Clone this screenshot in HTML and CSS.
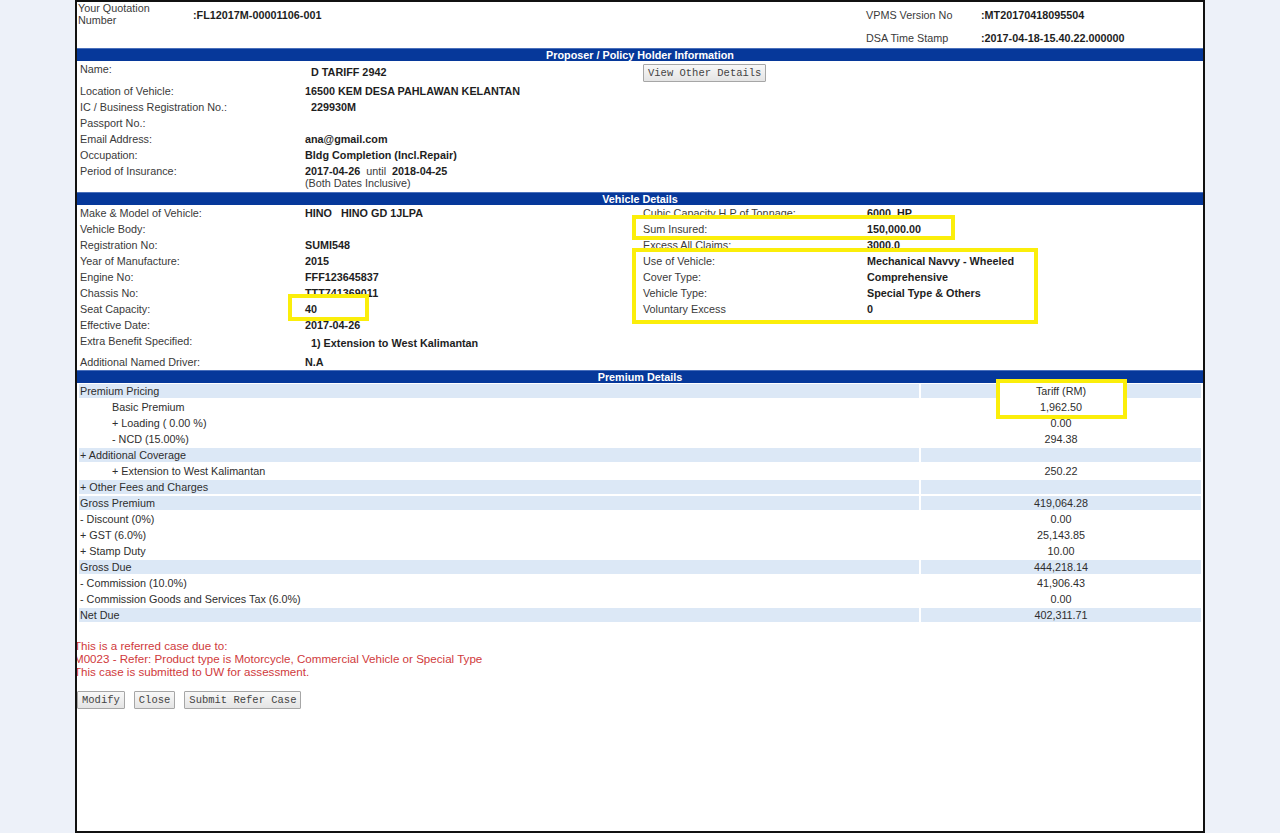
FILE: index.html
```html
<!DOCTYPE html>
<html>
<head>
<meta charset="utf-8">
<title>Quotation</title>
<link rel="stylesheet" href="styles.css">
</head>
<body>
<div class="panel">
  <div class="head">
    <div class="lbl wrap">Your Quotation Number</div>
    <div class="val">:FL12017M-00001106-001</div>
    <div class="lbl">VPMS Version No</div>
    <div class="val">:MT20170418095504</div>
    <div></div>
    <div></div>
    <div class="lbl">DSA Time Stamp</div>
    <div class="val">:2017-04-18-15.40.22.000000</div>
  </div>

  <div class="bar">Proposer / Policy Holder Information</div>
  <div class="section">
    <div class="row row-name">
      <div class="lbl top">Name:</div>
      <div class="val ind">D TARIFF 2942</div>
      <div><button class="btn" type="button">View Other Details</button></div>
    </div>
    <div class="row"><div class="lbl">Location of Vehicle:</div><div class="val">16500 KEM DESA PAHLAWAN KELANTAN</div></div>
    <div class="row"><div class="lbl">IC / Business Registration No.:</div><div class="val ind">229930M</div></div>
    <div class="row"><div class="lbl">Passport No.:</div><div class="val"></div></div>
    <div class="row"><div class="lbl">Email Address:</div><div class="val">ana@gmail.com</div></div>
    <div class="row"><div class="lbl">Occupation:</div><div class="val">Bldg Completion (Incl.Repair)</div></div>
    <div class="row row-period">
      <div class="lbl top">Period of Insurance:</div>
      <div class="period">
        <div class="val">2017-04-26&nbsp; <span class="until">until</span> &nbsp;2018-04-25</div>
        <div class="note">(Both Dates Inclusive)</div>
      </div>
    </div>
  </div>

  <div class="bar">Vehicle Details</div>
  <div class="section">
    <div class="row"><div class="lbl">Make &amp; Model of Vehicle:</div><div class="val">HINO&nbsp;&nbsp; HINO GD 1JLPA</div><div class="lbl">Cubic Capacity H.P of Tonnage:</div><div class="val">6000&nbsp; HP</div></div>
    <div class="row"><div class="lbl">Vehicle Body:</div><div class="val"></div><div class="lbl hl">Sum Insured:</div><div class="val hl">150,000.00</div></div>
    <div class="row"><div class="lbl">Registration No:</div><div class="val">SUMI548</div><div class="lbl">Excess All Claims:</div><div class="val">3000.0</div></div>
    <div class="row"><div class="lbl">Year of Manufacture:</div><div class="val">2015</div><div class="lbl hl">Use of Vehicle:</div><div class="val hl">Mechanical Navvy - Wheeled</div></div>
    <div class="row"><div class="lbl">Engine No:</div><div class="val">FFF123645837</div><div class="lbl hl">Cover Type:</div><div class="val hl">Comprehensive</div></div>
    <div class="row"><div class="lbl">Chassis No:</div><div class="val">TTT741369011</div><div class="lbl hl">Vehicle Type:</div><div class="val hl">Special Type &amp; Others</div></div>
    <div class="row"><div class="lbl">Seat Capacity:</div><div class="val"><span class="hl">40</span></div><div class="lbl hl">Voluntary Excess</div><div class="val hl">0</div></div>
    <div class="row"><div class="lbl">Effective Date:</div><div class="val">2017-04-26</div></div>
    <div class="row row-extra"><div class="lbl top">Extra Benefit Specified:</div><div class="val ind low">1) Extension to West Kalimantan</div></div>
    <div class="row row-driver"><div class="lbl">Additional Named Driver:</div><div class="val">N.A</div></div>
  </div>

  <div class="bar">Premium Details</div>
  <div class="prem">
    <div class="c b">Premium Pricing</div><div class="v b"><span class="hl">Tariff (RM)</span></div>
    <div class="c sub">Basic Premium</div><div class="v"><span class="hl">1,962.50</span></div>
    <div class="c sub">+ Loading ( 0.00 %)</div><div class="v">0.00</div>
    <div class="c sub">- NCD (15.00%)</div><div class="v">294.38</div>
    <div class="c b">+ Additional Coverage</div><div class="v b"></div>
    <div class="c sub">+ Extension to West Kalimantan</div><div class="v">250.22</div>
    <div class="c b">+ Other Fees and Charges</div><div class="v b"></div>
    <div class="c b">Gross Premium</div><div class="v b">419,064.28</div>
    <div class="c">- Discount (0%)</div><div class="v">0.00</div>
    <div class="c">+ GST (6.0%)</div><div class="v">25,143.85</div>
    <div class="c">+ Stamp Duty</div><div class="v">10.00</div>
    <div class="c b">Gross Due</div><div class="v b">444,218.14</div>
    <div class="c">- Commission (10.0%)</div><div class="v">41,906.43</div>
    <div class="c">- Commission Goods and Services Tax (6.0%)</div><div class="v">0.00</div>
    <div class="c b">Net Due</div><div class="v b">402,311.71</div>
  </div>

  <div class="refer">
    <div>This is a referred case due to:</div>
    <div>M0023 - Refer: Product type is Motorcycle, Commercial Vehicle or Special Type</div>
    <div>This case is submitted to UW for assessment.</div>
  </div>

  <div class="actions">
    <button class="btn" type="button">Modify</button>
    <button class="btn" type="button">Close</button>
    <button class="btn" type="button">Submit Refer Case</button>
  </div>

  <div class="mark mark-sum"></div>
  <div class="mark mark-use"></div>
  <div class="mark mark-seat"></div>
  <div class="mark mark-tariff"></div>
</div>
</body>
</html>
```

FILE: styles.css
```css
html, body {
  margin: 0;
  padding: 0;
}
body {
  background: #edf1f9;
  font-family: "Liberation Sans", Arial, sans-serif;
  font-size: 10.8px;
  color: #3a3a3a;
}
.panel {
  position: relative;
  box-sizing: border-box;
  margin-left: 75px;
  width: 1130px;
  height: 833px;
  border: 2px solid #111;
  background: #fff;
  overflow: hidden;
}
.head {
  display: grid;
  grid-template-columns: 116px 673px 115px 1fr;
  grid-template-rows: 26px 20px;
  align-items: center;
}
.head > .lbl:first-child {
  padding-left: 1px;
}
.lbl {
  color: #3a3a3a;
  white-space: nowrap;
}
.head .wrap {
  width: 80px;
  line-height: 12px;
  align-self: start;
  white-space: normal;
}
.val {
  font-weight: bold;
  color: #1e1e1e;
  white-space: nowrap;
}
.bar {
  box-sizing: border-box;
  height: 13px;
  line-height: 12px;
  background: #06389a;
  border-top: 1px solid #4a70bb;
  color: #fff;
  font-weight: bold;
  text-align: center;
}
.row {
  display: grid;
  grid-template-columns: 228px 338px 224px 1fr;
  height: 16px;
  line-height: 16px;
  align-items: center;
}
.row > .lbl:first-child {
  padding-left: 3px;
}
.row .top {
  align-self: start;
}
.ind {
  padding-left: 6px;
}
.row-name {
  height: 22px;
}
.row-period {
  height: 29px;
}
.row-period .period {
  align-self: start;
  padding-top: 2px;
  line-height: 12px;
}
.until {
  font-weight: normal;
  color: #3a3a3a;
}
.note {
  color: #3a3a3a;
}
.row-extra {
  height: 20px;
}
.row-extra .low {
  align-self: start;
  padding-top: 2px;
}
.row-driver {
  height: 17px;
}
.btn {
  box-sizing: border-box;
  height: 18px;
  padding: 0 4px;
  font-family: "Liberation Mono", "Courier New", monospace;
  font-size: 10.5px;
  line-height: 16px;
  color: #444;
  background: linear-gradient(#f8f8f8, #e4e4e4);
  border: 1px solid #a6a6a6;
  border-radius: 1px;
}
.row-name .btn {
  margin-top: 2px;
}
.prem {
  display: grid;
  grid-template-columns: 840px 1fr;
  grid-auto-rows: 14px;
  column-gap: 2px;
  row-gap: 2px;
  padding: 1px 2px 0 2px;
  line-height: 14px;
  color: #2e2e2e;
}
.prem .c {
  padding-left: 1px;
  white-space: nowrap;
}
.prem .sub {
  padding-left: 33px;
}
.prem .v {
  text-align: center;
}
.prem .b {
  background: #dce8f6;
}
.refer {
  margin: 17px 0 0 -3px;
  font-size: 11.6px;
  line-height: 13px;
  color: #d03a3c;
}
.actions {
  display: flex;
  gap: 9px;
  margin-top: 13px;
}
.hl {
  position: relative;
  z-index: 2;
}
.mark {
  position: absolute;
  box-sizing: border-box;
  border: 4px solid #fbee0a;
  background: #fff;
  z-index: 1;
}
.mark-sum {
  left: 555px;
  top: 213px;
  width: 323px;
  height: 25px;
}
.mark-use {
  left: 555px;
  top: 246px;
  width: 406px;
  height: 76px;
}
.mark-seat {
  left: 211px;
  top: 292px;
  width: 81px;
  height: 27px;
}
.mark-tariff {
  left: 919px;
  top: 377px;
  width: 131px;
  height: 40px;
}
```
